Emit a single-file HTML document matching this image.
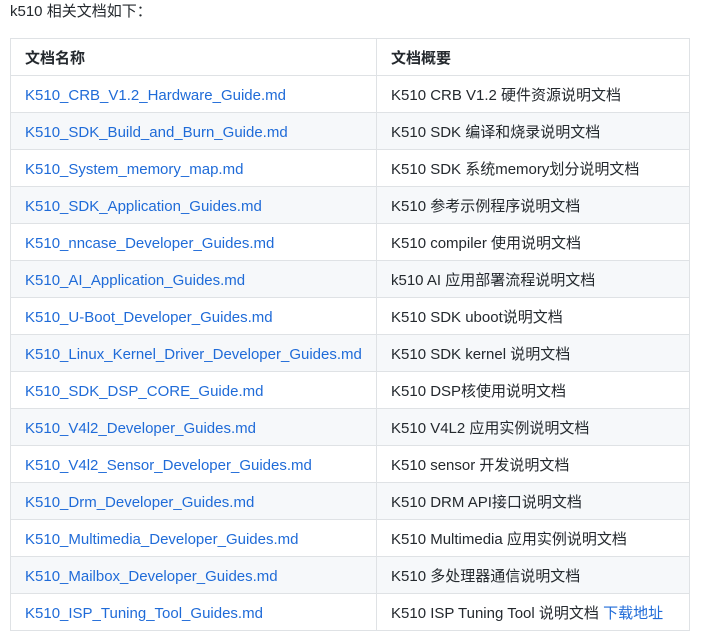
<!DOCTYPE html>
<html><head><meta charset="utf-8"><style>
html,body{margin:0;padding:0;background:#fff;width:706px;height:637px;overflow:hidden}
body{font-family:"Liberation Sans","Noto Sans CJK SC",sans-serif;font-size:15px;color:#24292e}
p{position:absolute;left:10px;top:1px;margin:0;line-height:22px}
table{position:absolute;left:10px;top:38px;border-collapse:collapse;width:680px}
td,th{border:1px solid #dfe2e5;height:33px;padding:3px 0 0 14px;text-align:left;white-space:nowrap;line-height:20px;box-sizing:content-box}
th{font-weight:bold}
td:first-child,th:first-child{width:351px}
tr:nth-child(odd) td{background:#f6f8fa}
a{color:#1f6bd8;text-decoration:none}
</style></head><body>
<p>k510 相关文档如下：</p>
<table>
<tr><th>文档名称</th><th>文档概要</th></tr>
<tr><td><a>K510_CRB_V1.2_Hardware_Guide.md</a></td><td>K510 CRB V1.2 硬件资源说明文档</td></tr>
<tr><td><a>K510_SDK_Build_and_Burn_Guide.md</a></td><td>K510 SDK 编译和烧录说明文档</td></tr>
<tr><td><a>K510_System_memory_map.md</a></td><td>K510 SDK 系统memory划分说明文档</td></tr>
<tr><td><a>K510_SDK_Application_Guides.md</a></td><td>K510 参考示例程序说明文档</td></tr>
<tr><td><a>K510_nncase_Developer_Guides.md</a></td><td>K510 compiler 使用说明文档</td></tr>
<tr><td><a>K510_AI_Application_Guides.md</a></td><td>k510 AI 应用部署流程说明文档</td></tr>
<tr><td><a>K510_U-Boot_Developer_Guides.md</a></td><td>K510 SDK uboot说明文档</td></tr>
<tr><td><a>K510_Linux_Kernel_Driver_Developer_Guides.md</a></td><td>K510 SDK kernel 说明文档</td></tr>
<tr><td><a>K510_SDK_DSP_CORE_Guide.md</a></td><td>K510 DSP核使用说明文档</td></tr>
<tr><td><a>K510_V4l2_Developer_Guides.md</a></td><td>K510 V4L2 应用实例说明文档</td></tr>
<tr><td><a>K510_V4l2_Sensor_Developer_Guides.md</a></td><td>K510 sensor 开发说明文档</td></tr>
<tr><td><a>K510_Drm_Developer_Guides.md</a></td><td>K510 DRM API接口说明文档</td></tr>
<tr><td><a>K510_Multimedia_Developer_Guides.md</a></td><td>K510 Multimedia 应用实例说明文档</td></tr>
<tr><td><a>K510_Mailbox_Developer_Guides.md</a></td><td>K510 多处理器通信说明文档</td></tr>
<tr><td><a>K510_ISP_Tuning_Tool_Guides.md</a></td><td>K510 ISP Tuning Tool 说明文档 <a>下载地址</a></td></tr>
</table>
</body></html>
